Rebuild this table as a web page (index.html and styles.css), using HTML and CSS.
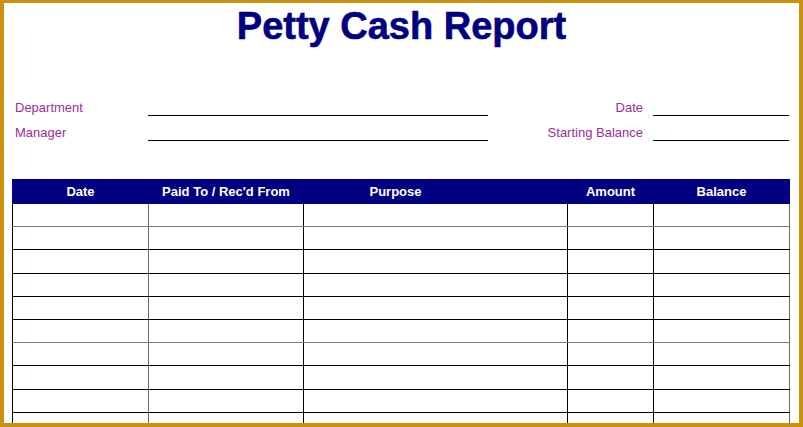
FILE: index.html
```html
<!DOCTYPE html>
<html>
<head>
<meta charset="utf-8">
<link rel="stylesheet" href="styles.css">
</head>
<body>
<div class="frame">
  <h1 class="title">Petty Cash Report</h1>
  <div class="fields">
    <div class="label">Department</div>
    <div class="blank"></div>
    <div class="label right">Date</div>
    <div class="blank"></div>
    <div class="label">Manager</div>
    <div class="blank"></div>
    <div class="label right">Starting Balance</div>
    <div class="blank"></div>
  </div>
  <table class="ledger">
    <colgroup>
      <col class="c-date"><col class="c-paid"><col class="c-purpose"><col class="c-amount"><col class="c-balance">
    </colgroup>
    <thead>
      <tr><th>Date</th><th>Paid To / Rec'd From</th><th class="th-purpose">Purpose</th><th>Amount</th><th>Balance</th></tr>
    </thead>
    <tbody>
      <tr class="gray"><td class="soft"></td><td></td><td></td><td></td><td class="soft"></td></tr>
      <tr><td class="soft"></td><td></td><td></td><td></td><td class="soft"></td></tr>
      <tr><td class="soft"></td><td></td><td></td><td></td><td class="soft"></td></tr>
      <tr><td class="soft"></td><td></td><td></td><td></td><td class="soft"></td></tr>
      <tr><td class="soft"></td><td></td><td></td><td></td><td class="soft"></td></tr>
      <tr class="gray"><td class="soft"></td><td></td><td></td><td></td><td class="soft"></td></tr>
      <tr><td class="soft"></td><td></td><td></td><td></td><td class="soft"></td></tr>
      <tr><td class="soft"></td><td></td><td></td><td></td><td class="soft"></td></tr>
      <tr><td class="soft"></td><td></td><td></td><td></td><td class="soft"></td></tr>
      <tr><td class="soft"></td><td></td><td></td><td></td><td class="soft"></td></tr>
    </tbody>
  </table>
</div>
</body>
</html>
```

FILE: styles.css
```css
html, body {
  margin: 0;
  padding: 0;
  background: #fff;
}
.frame {
  box-sizing: border-box;
  width: 803px;
  height: 427px;
  border-style: solid;
  border-color: #c9930f;
  border-width: 3px 4px 4px 4px;
  overflow: hidden;
  font-family: "Liberation Sans", Arial, sans-serif;
  background: #fff;
}
.title {
  margin: 1px 0 0 0;
  height: 44px;
  line-height: 44px;
  font-size: 38px;
  font-weight: bold;
  color: #000080;
  text-align: center;
  -webkit-text-stroke: 0.6px #000080;
}
.fields {
  display: grid;
  grid-template-columns: 133px 340px 165px 136px;
  grid-auto-rows: 25px;
  margin: 43px 0 0 11px;
}
.label {
  align-self: end;
  font-size: 13px;
  line-height: 16px;
  padding-bottom: 0;
  color: #9b2f9b;
}
.label.right {
  text-align: right;
  padding-right: 10px;
}
.blank {
  border-bottom: 1px solid #000;
}
.ledger {
  margin: 38px 0 0 8px;
  width: 777px;
  table-layout: fixed;
  border-collapse: collapse;
  font-family: "Liberation Sans", Arial, sans-serif;
}
.c-date { width: 136px; }
.c-paid { width: 155px; }
.c-purpose { width: 264px; }
.c-amount { width: 86px; }
.c-balance { width: 136px; }
.ledger th {
  background: #000080;
  color: #fff;
  font-size: 13px;
  font-weight: bold;
  height: 23px;
  padding: 0;
  border: 1px solid #000080;
  text-align: center;
  vertical-align: middle;
}
.ledger .th-purpose {
  padding-right: 80px;
}
.ledger td {
  height: 22.2px;
  padding: 0;
  border: 1px solid #000;
}
.ledger td.soft {
  border-right-color: #6a6a6a;
}
.ledger tr.gray td {
  border-bottom-color: #7a7a7a;
}
```
